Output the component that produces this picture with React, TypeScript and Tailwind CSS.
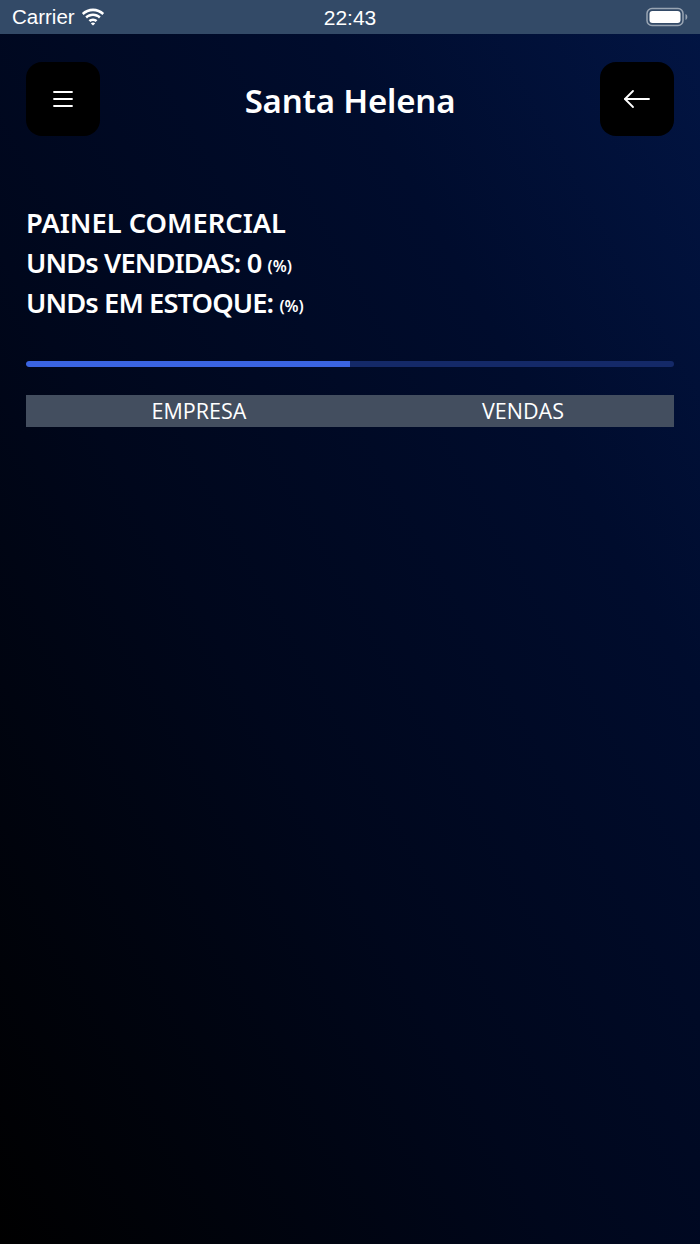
import React from "react";

function Wifi() {
  return (
    <svg width="24" height="18" viewBox="0 0 24 18" fill="white">
      <path d="M12 3.2c3.6 0 6.9 1.4 9.4 3.7l1.7-1.8C20.1 2.3 16.2.6 12 .6S3.9 2.3.9 5.1l1.7 1.8C5.1 4.6 8.4 3.2 12 3.2z" />
      <path d="M12 8.1c2.3 0 4.4.9 6 2.3l1.7-1.8C17.6 6.7 14.9 5.6 12 5.6s-5.6 1.1-7.7 3l1.7 1.8c1.6-1.4 3.7-2.3 6-2.3z" />
      <path d="M12 13c1 0 1.9.4 2.6 1l1.8-1.8C15.2 11.1 13.7 10.4 12 10.4s-3.2.7-4.4 1.8L9.4 14c.7-.6 1.6-1 2.6-1z" />
      <path d="M12 17.6l2.2-2.2c-.6-.5-1.4-.8-2.2-.8s-1.6.3-2.2.8z" />
    </svg>
  );
}

function Battery() {
  return (
    <svg width="42" height="20" viewBox="0 0 42 20">
      <rect x="1" y="1.5" width="36" height="17" rx="5" fill="none" stroke="rgba(255,255,255,0.5)" strokeWidth="1.5" />
      <rect x="3.5" y="4" width="31" height="12" rx="3" fill="white" />
      <path d="M39.5 7v6c1.2-.4 1.8-1.6 1.8-3s-.6-2.6-1.8-3z" fill="rgba(255,255,255,0.5)" />
    </svg>
  );
}

export default function App() {
  const font = { fontFamily: '"Noto Sans", "Open Sans", sans-serif' };
  return (
    <div className="w-[700px] h-[1244px] flex flex-col bg-[linear-gradient(to_bottom_left,#021544_0%,#000c2d_28%,#00071c_60%,#000000_100%)] text-white overflow-hidden">
      <div
        className="h-[34px] bg-[#334a67] flex items-center justify-between px-3 relative"
        style={{ fontFamily: '"Liberation Sans", Arial, sans-serif' }}
      >
        <div className="flex items-center gap-[6px] text-[20.5px] leading-none">
          <span>Carrier</span>
          <Wifi />
        </div>
        <div className="absolute left-0 right-0 text-center text-[21px] font-medium leading-none pointer-events-none">22:43</div>
        <Battery />
      </div>

      <div className="px-[26px]" style={font}>
        <div className="mt-[28px] flex items-center justify-between">
          <button className="w-[74px] h-[74px] rounded-[16px] bg-black flex items-center justify-center">
            <svg width="20" height="18" viewBox="0 0 20 18" stroke="white" strokeWidth="1.8" strokeLinecap="round">
              <line x1="1" y1="2" x2="19" y2="2" />
              <line x1="1" y1="9" x2="19" y2="9" />
              <line x1="1" y1="16" x2="19" y2="16" />
            </svg>
          </button>
          <div className="text-[33px] font-semibold leading-none tracking-[-0.2px] mt-[2px]">Santa Helena</div>
          <button className="w-[74px] h-[74px] rounded-[16px] bg-black flex items-center justify-center">
            <svg width="28" height="20" viewBox="0 0 28 20" fill="none" stroke="white" strokeWidth="1.8" strokeLinecap="round" strokeLinejoin="round">
              <line x1="2" y1="10" x2="26" y2="10" />
              <polyline points="10,2 2,10 10,18" />
            </svg>
          </button>
        </div>

        <div className="mt-[67px] flex flex-col">
          <div className="h-[40px] flex items-center text-[27.3px] font-semibold leading-none">PAINEL COMERCIAL</div>
          <div className="h-[40px] flex items-center text-[27.3px] font-semibold leading-none whitespace-pre">
            <span className="tracking-[-0.9px]">UNDs VENDIDAS: 0 </span>
            <span className="text-[16px] leading-none self-end mb-[9px]">(%)</span>
          </div>
          <div className="h-[40px] flex items-center text-[27.3px] font-semibold leading-none whitespace-pre">
            <span className="tracking-[-0.9px]">UNDs EM ESTOQUE: </span>
            <span className="text-[16px] leading-none self-end mb-[9px]">(%)</span>
          </div>
        </div>

        <div className="mt-[38px] h-[6px] rounded-full bg-[#142968] overflow-hidden">
          <div className="h-full w-1/2 bg-[#3a64e2] rounded-l-full" />
        </div>

        <div
          className="mt-[28px] h-[32px] bg-[#434e5f] grid grid-cols-2 text-[21.5px] text-white"
          style={{ fontFamily: '"Open Sans", sans-serif' }}
        >
          <div className="flex items-center justify-center pl-[22px]">EMPRESA</div>
          <div className="flex items-center justify-center pl-[22px]">VENDAS</div>
        </div>
      </div>
    </div>
  );
}
